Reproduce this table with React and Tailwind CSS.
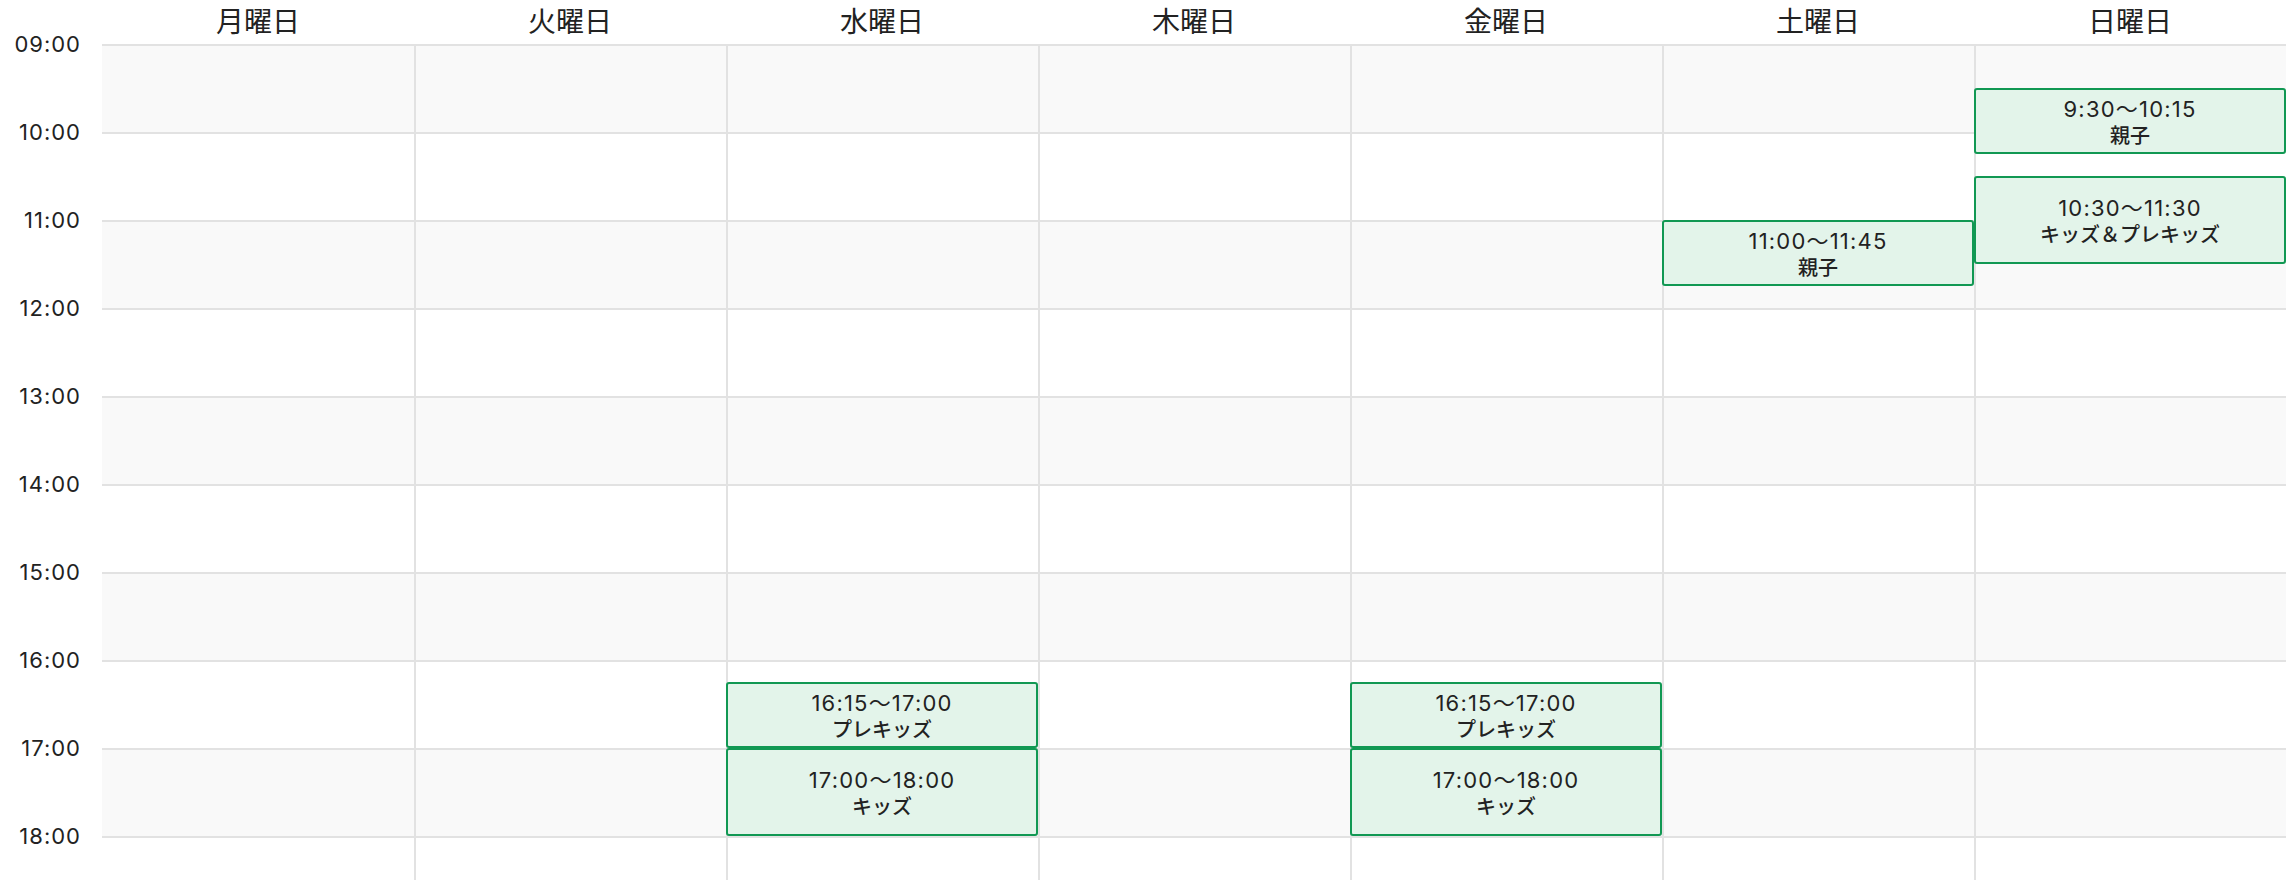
import React from "react";

const DAYS = ["月曜日", "火曜日", "水曜日", "木曜日", "金曜日", "土曜日", "日曜日"];
const HOURS = ["09:00", "10:00", "11:00", "12:00", "13:00", "14:00", "15:00", "16:00", "17:00", "18:00"];
const HOUR_H = 88;

const EVENTS = {
  2: [
    { s: 16.25, e: 17, time: "16:15〜17:00", title: "プレキッズ" },
    { s: 17, e: 18, time: "17:00〜18:00", title: "キッズ" },
  ],
  4: [
    { s: 16.25, e: 17, time: "16:15〜17:00", title: "プレキッズ" },
    { s: 17, e: 18, time: "17:00〜18:00", title: "キッズ" },
  ],
  5: [{ s: 11, e: 11.75, time: "11:00〜11:45", title: "親子" }],
  6: [
    { s: 9.5, e: 10.25, time: "9:30〜10:15", title: "親子" },
    { s: 10.5, e: 11.5, time: "10:30〜11:30", title: "キッズ＆プレキッズ" },
  ],
};

function Event({ ev, first }) {
  return (
    <div
      className={
        "absolute right-0 flex flex-col items-center justify-center rounded-[3px] border-2 border-[#119853] bg-[#e3f4ea] text-[#222] " +
        (first ? "left-0" : "left-[-2px]")
      }
      style={{ top: (ev.s - 9) * HOUR_H, height: (ev.e - ev.s) * HOUR_H }}
    >
      <div className="font-['Inter','Noto_Sans_CJK_JP',sans-serif] text-[22px] leading-[26px] tracking-[1.2px]">{ev.time}</div>
      <div className="font-['Noto_Sans_CJK_JP',sans-serif] text-[20px] font-medium leading-[25px]">{ev.title}</div>
    </div>
  );
}

export default function App() {
  return (
    <div className="h-[880px] w-[2288px] overflow-hidden bg-white text-[#222] font-['Noto_Sans_CJK_JP',sans-serif]">
      <div className="flex h-[44px]">
        <div className="w-[102px] shrink-0" />
        {DAYS.map((d) => (
          <div key={d} className="w-[312px] shrink-0 text-center text-[28px] leading-[41px]">
            {d}
          </div>
        ))}
      </div>
      <div className="flex">
        <div className="flex w-[102px] shrink-0 flex-col">
          {HOURS.map((h) => (
            <div key={h} className="h-[88px]">
              <div className="-translate-y-1/2 pr-[21px] text-right font-['Inter',sans-serif] text-[22px] leading-[28px] tracking-[1px]">
                {h}
              </div>
            </div>
          ))}
        </div>
        {DAYS.map((d, i) => (
          <div
            key={d}
            className={"relative flex w-[312px] shrink-0 flex-col " + (i > 0 ? "border-l-2 border-[#e2e2e2]" : "")}
          >
            {HOURS.map((h, r) => (
              <div
                key={h}
                className={"h-[88px] border-t-2 border-[#e2e2e2] " + (r % 2 === 0 ? "bg-[#f9f9f9]" : "bg-white")}
              />
            ))}
            {(EVENTS[i] || []).map((ev) => (
              <Event key={ev.time} ev={ev} first={i === 0} />
            ))}
          </div>
        ))}
      </div>
    </div>
  );
}
